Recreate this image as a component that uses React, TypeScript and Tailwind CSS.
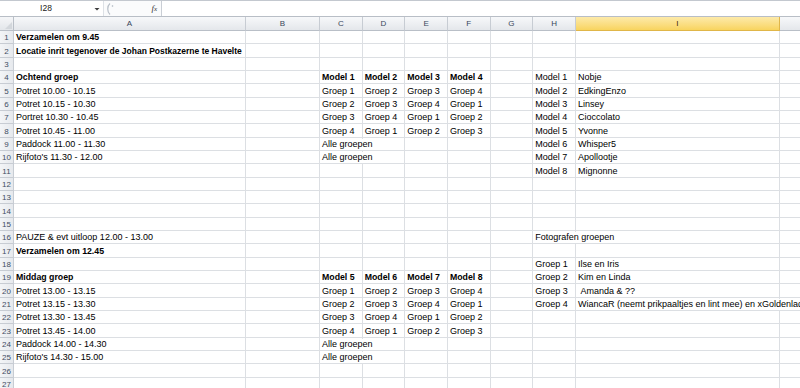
import React from "react";

type Cell = { t: string; b?: boolean; o?: boolean };
type Row = Partial<Record<string, Cell>>;

const COLS = ["A", "B", "C", "D", "E", "F", "G", "H", "I", "J"];

const g = (n: number): Cell => ({ t: `Groep ${n}` });
const mb = (n: number): Cell => ({ t: `Model ${n}`, b: true });

const rows: Row[] = [
  { A: { t: "Verzamelen om 9.45", b: true } },
  { A: { t: "Locatie inrit tegenover de Johan Postkazerne te Havelte", b: true, o: true } },
  {},
  { A: { t: "Ochtend groep", b: true }, C: mb(1), D: mb(2), E: mb(3), F: mb(4), H: { t: "Model 1" }, I: { t: "Nobje" } },
  { A: { t: "Potret 10.00 - 10.15" }, C: g(1), D: g(2), E: g(3), F: g(4), H: { t: "Model 2" }, I: { t: "EdkingEnzo" } },
  { A: { t: "Potret 10.15 - 10.30" }, C: g(2), D: g(3), E: g(4), F: g(1), H: { t: "Model 3" }, I: { t: "Linsey" } },
  { A: { t: "Portret 10.30 - 10.45" }, C: g(3), D: g(4), E: g(1), F: g(2), H: { t: "Model 4" }, I: { t: "Cioccolato" } },
  { A: { t: "Potret 10.45 - 11.00" }, C: g(4), D: g(1), E: g(2), F: g(3), H: { t: "Model 5" }, I: { t: "Yvonne" } },
  { A: { t: "Paddock 11.00 - 11.30" }, C: { t: "Alle groepen", o: true }, H: { t: "Model 6" }, I: { t: "Whisper5" } },
  { A: { t: "Rijfoto's 11.30 - 12.00" }, C: { t: "Alle groepen", o: true }, H: { t: "Model 7" }, I: { t: "Apollootje" } },
  { H: { t: "Model 8" }, I: { t: "Mignonne" } },
  {},
  {},
  {},
  {},
  { A: { t: "PAUZE & evt uitloop 12.00 - 13.00" }, H: { t: "Fotografen groepen", o: true } },
  { A: { t: "Verzamelen om 12.45", b: true } },
  { H: g(1), I: { t: "Ilse en Iris" } },
  { A: { t: "Middag groep", b: true }, C: mb(5), D: mb(6), E: mb(7), F: mb(8), H: g(2), I: { t: "Kim en Linda" } },
  { A: { t: "Potret 13.00 - 13.15" }, C: g(1), D: g(2), E: g(3), F: g(4), H: g(3), I: { t: "\u00a0Amanda & ??" } },
  { A: { t: "Potret 13.15 - 13.30" }, C: g(2), D: g(3), E: g(4), F: g(1), H: g(4), I: { t: "WiancaR (neemt prikpaaltjes en lint mee) en xGoldenlady", o: true } },
  { A: { t: "Potret 13.30 - 13.45" }, C: g(3), D: g(4), E: g(1), F: g(2) },
  { A: { t: "Potret 13.45 - 14.00" }, C: g(4), D: g(1), E: g(2), F: g(3) },
  { A: { t: "Paddock 14.00 - 14.30" }, C: { t: "Alle groepen", o: true } },
  { A: { t: "Rijfoto's 14.30 - 15.00" }, C: { t: "Alle groepen", o: true } },
  {},
  {},
];

const gridCols =
  "grid grid-cols-[14px_232px_74px_42.67px_42.67px_42.67px_42.67px_42.67px_42.67px_204px_42px]";

export default function App() {
  return (
    <div className="w-[800px] h-[388px] overflow-hidden bg-white font-['Liberation_Sans',Arial,sans-serif] text-[9px] text-black">
      {/* Formula bar */}
      <div className="h-[17px] flex items-stretch border-t border-[#c3c8cf] border-b border-b-[#b8bec6] bg-[#fafbfc]">
        <div className="w-[104px] flex items-center bg-white border-r border-[#dde1e6]">
          <div className="w-[92px] text-center text-[8.5px] text-[#222]">I28</div>
          <svg width="8" height="6" viewBox="0 0 8 6" className="ml-[1px]">
            <path d="M1.5 2 L6.5 2 L4 4.5 Z" fill="#3c3c3c" />
          </svg>
        </div>
        <div className="w-[14px] flex items-center justify-center">
          <svg width="12" height="14" viewBox="0 0 12 14">
            <path d="M5 1.5 C2 4 2 10 5 12.5" stroke="#b8bfc8" strokeWidth="1.2" fill="none" />
            <circle cx="7.5" cy="4" r="0.8" fill="#aab2bd" />
          </svg>
        </div>
        <div className="w-[43px] flex items-center justify-end pr-[4px]">
          <span className="font-['Liberation_Serif',serif] italic text-[9px] text-[#333] leading-none">
            f<span className="text-[7px]">x</span>
          </span>
        </div>
        <div className="flex-1 bg-white border-l border-[#c9ced5]" />
      </div>

      {/* Column header */}
      <div className={`${gridCols} h-[14px]`}>
        <div className="bg-gradient-to-b from-[#f5f6f8] to-[#e3e6ea] border-r border-b border-[#b9bfc7] flex items-end justify-end pr-[1px] pb-[1px]">
          <svg width="7" height="7" viewBox="0 0 7 7">
            <path d="M7 0 L7 7 L0 7 Z" fill="#d3d7dc" />
          </svg>
        </div>
        {COLS.map((c) =>
          c === "I" ? (
            <div
              key={c}
              className="bg-gradient-to-b from-[#fdeaa9] to-[#f8d45e] border-r border-b border-[#e0b649] flex items-center justify-center text-[8px] text-[#3a2a00]"
            >
              {c}
            </div>
          ) : (
            <div
              key={c}
              className="bg-gradient-to-b from-[#f7f8fa] to-[#e4e7eb] border-r border-b border-[#c7ccd3] border-b-[#b9bfc7] flex items-center justify-center text-[8px] text-[#38465a]"
            >
              {c === "J" ? "" : c}
            </div>
          )
        )}
      </div>

      {/* Sheet */}
      <div className={`${gridCols} auto-rows-[13.33px]`}>
        {rows.map((row, ri) => (
          <React.Fragment key={ri}>
            <div className="bg-gradient-to-r from-[#f3f5f7] to-[#e6e9ed] border-r border-b border-[#c7ccd3] flex items-end justify-center text-[8px] leading-[11px] text-[#3e4d62]">
              {ri + 1}
            </div>
            {COLS.map((c) => {
              const cell = row[c];
              return (
                <div
                  key={c}
                  className="border-r border-b border-[#dcdfe3] flex items-end pl-[2px] whitespace-nowrap overflow-visible leading-[11px]"
                >
                  {cell ? (
                    cell.o ? (
                      <span className={`relative z-10 bg-white pr-[1px] ${cell.b ? "font-bold text-[8.5px]" : ""}`}>{cell.t}</span>
                    ) : (
                      <span className={cell.b ? "font-bold text-[8.75px]" : ""}>{cell.t}</span>
                    )
                  ) : null}
                </div>
              );
            })}
          </React.Fragment>
        ))}
      </div>
    </div>
  );
}
